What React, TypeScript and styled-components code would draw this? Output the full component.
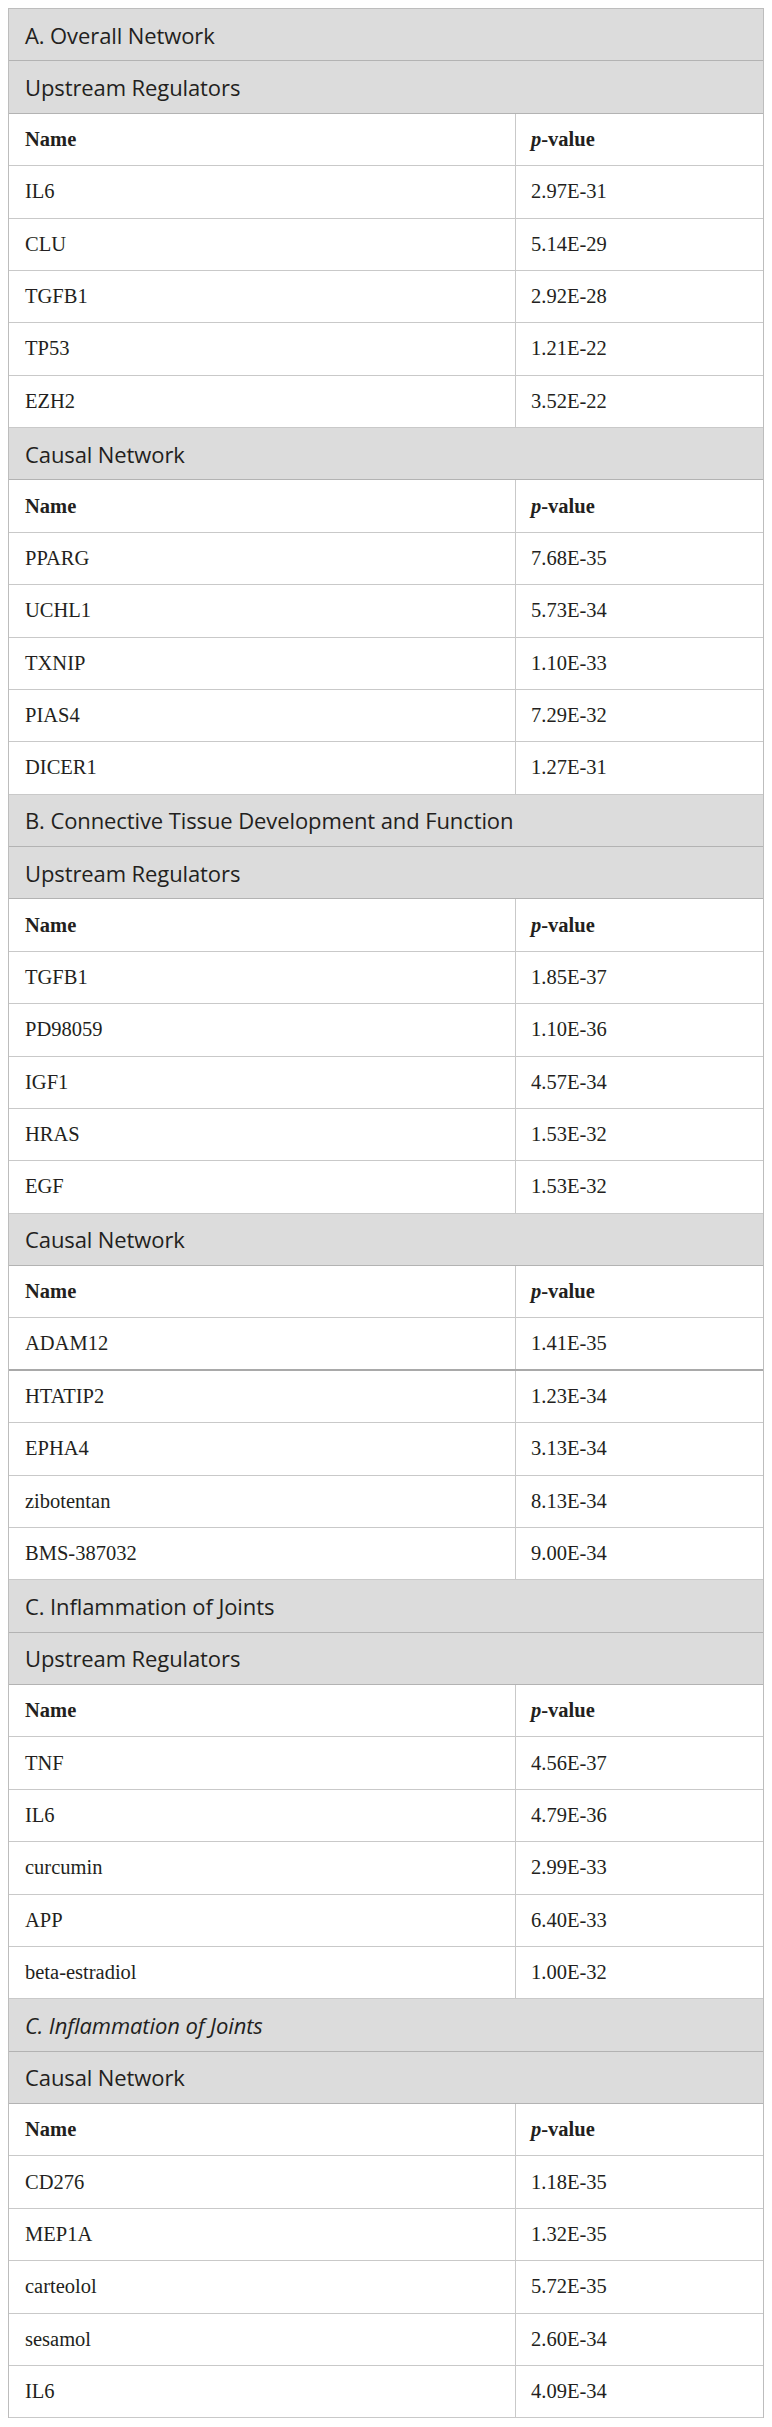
import React from "react";
import styled, { createGlobalStyle } from "styled-components";

const GlobalStyle = createGlobalStyle`
  html, body { margin: 0; padding: 0; background: #ffffff; }
  body { padding: 8px; }
`;

const Table = styled.div`
  width: 756px;
  border: 1px solid #bdbdbd;
  border-bottom: none;
  box-sizing: border-box;
  color: #231f20;
`;

const SectionRow = styled.div<{ $italic?: boolean }>`
  height: 52.39px;
  box-sizing: border-box;
  border-bottom: 1px solid #b3b3b3;
  background: #dcdcdc;
  display: flex;
  align-items: center;
  padding-left: 16px;
  font-family: "Open Sans", "Noto Sans", sans-serif;
  font-size: 22px;
  font-style: ${(p) => (p.$italic ? "italic" : "normal")};
  letter-spacing: -0.1px;
`;

const DataRow = styled.div<{ $heavy?: boolean }>`
  height: 52.39px;
  box-sizing: border-box;
  border-bottom: ${(p) => (p.$heavy ? "2px solid #a9a9a9" : "1px solid #c9c9c9")};
  display: grid;
  grid-template-columns: 506px 1fr;
  font-family: "Liberation Serif", "Times New Roman", serif;
  font-size: 20.5px;
`;

const Cell = styled.div<{ $bold?: boolean; $divider?: boolean }>`
  display: flex;
  align-items: center;
  padding-left: ${(p) => (p.$divider ? "15px" : "16px")};
  font-weight: ${(p) => (p.$bold ? 700 : 400)};
  border-left: ${(p) => (p.$divider ? "1px solid #c9c9c9" : "none")};
`;

const P = styled.i`
  font-style: italic;
`;

type Block = {
  title?: string;
  titleItalic?: boolean;
  sub: string;
  rows: [string, string][];
  heavyAfter?: number;
};

const blocks: Block[] = [
  {
    title: "A. Overall Network",
    sub: "Upstream Regulators",
    rows: [
      ["IL6", "2.97E-31"],
      ["CLU", "5.14E-29"],
      ["TGFB1", "2.92E-28"],
      ["TP53", "1.21E-22"],
      ["EZH2", "3.52E-22"],
    ],
  },
  {
    sub: "Causal Network",
    rows: [
      ["PPARG", "7.68E-35"],
      ["UCHL1", "5.73E-34"],
      ["TXNIP", "1.10E-33"],
      ["PIAS4", "7.29E-32"],
      ["DICER1", "1.27E-31"],
    ],
  },
  {
    title: "B. Connective Tissue Development and Function",
    sub: "Upstream Regulators",
    rows: [
      ["TGFB1", "1.85E-37"],
      ["PD98059", "1.10E-36"],
      ["IGF1", "4.57E-34"],
      ["HRAS", "1.53E-32"],
      ["EGF", "1.53E-32"],
    ],
  },
  {
    sub: "Causal Network",
    rows: [
      ["ADAM12", "1.41E-35"],
      ["HTATIP2", "1.23E-34"],
      ["EPHA4", "3.13E-34"],
      ["zibotentan", "8.13E-34"],
      ["BMS-387032", "9.00E-34"],
    ],
    heavyAfter: 0,
  },
  {
    title: "C. Inflammation of Joints",
    sub: "Upstream Regulators",
    rows: [
      ["TNF", "4.56E-37"],
      ["IL6", "4.79E-36"],
      ["curcumin", "2.99E-33"],
      ["APP", "6.40E-33"],
      ["beta-estradiol", "1.00E-32"],
    ],
  },
  {
    title: "C. Inflammation of Joints",
    titleItalic: true,
    sub: "Causal Network",
    rows: [
      ["CD276", "1.18E-35"],
      ["MEP1A", "1.32E-35"],
      ["carteolol", "5.72E-35"],
      ["sesamol", "2.60E-34"],
      ["IL6", "4.09E-34"],
    ],
  },
];

export default function App() {
  return (
    <>
      <GlobalStyle />
      <Table>
        {blocks.map((b, bi) => (
          <React.Fragment key={bi}>
            {b.title && <SectionRow $italic={b.titleItalic}>{b.title}</SectionRow>}
            <SectionRow>{b.sub}</SectionRow>
            <DataRow>
              <Cell $bold>Name</Cell>
              <Cell $bold $divider>
                <P>p</P>-value
              </Cell>
            </DataRow>
            {b.rows.map(([n, v], ri) => (
              <DataRow key={ri} $heavy={b.heavyAfter === ri}>
                <Cell>{n}</Cell>
                <Cell $divider>{v}</Cell>
              </DataRow>
            ))}
          </React.Fragment>
        ))}
      </Table>
    </>
  );
}
